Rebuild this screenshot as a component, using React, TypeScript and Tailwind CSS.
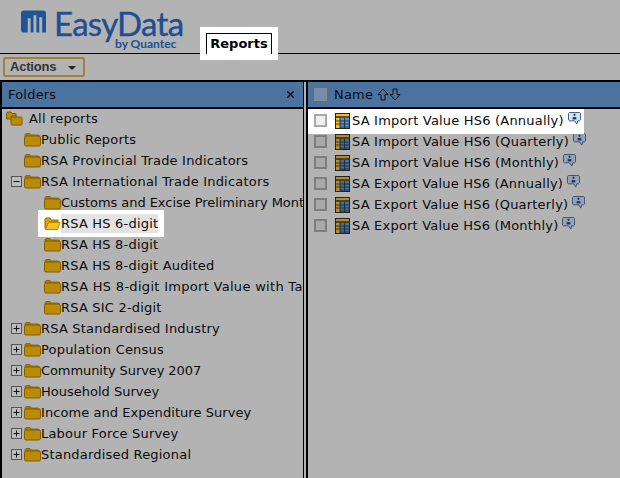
import React from 'react';
import { X } from 'lucide-react';

const folders = [
  { name: 'All reports', level: 0, icon: 'stack' },
  { name: 'Public Reports', level: 1 },
  { name: 'RSA Provincial Trade Indicators', level: 1 },
  { name: 'RSA International Trade Indicators', level: 1, toggle: 'minus' },
  { name: 'Customs and Excise Preliminary Mont', level: 2, track: 'tracking-[-0.05px]' },
  { name: 'RSA HS 6-digit', level: 2, active: true },
  { name: 'RSA HS 8-digit', level: 2 },
  { name: 'RSA HS 8-digit Audited', level: 2 },
  { name: 'RSA HS 8-digit Import Value with Ta', level: 2, track: 'tracking-[0.3px]' },
  { name: 'RSA SIC 2-digit', level: 2 },
  { name: 'RSA Standardised Industry', level: 1, toggle: 'plus' },
  { name: 'Population Census', level: 1, toggle: 'plus' },
  { name: 'Community Survey 2007', level: 1, toggle: 'plus', track: 'tracking-[-0.08px]' },
  { name: 'Household Survey', level: 1, toggle: 'plus', track: 'tracking-[0px]' },
  { name: 'Income and Expenditure Survey', level: 1, toggle: 'plus', track: 'tracking-[0.06px]' },
  { name: 'Labour Force Survey', level: 1, toggle: 'plus' },
  { name: 'Standardised Regional', level: 1, toggle: 'plus' },
];

const reports = [
  'SA Import Value HS6 (Annually)',
  'SA Import Value HS6 (Quarterly)',
  'SA Import Value HS6 (Monthly)',
  'SA Export Value HS6 (Annually)',
  'SA Export Value HS6 (Quarterly)',
  'SA Export Value HS6 (Monthly)',
];

const Logo = () => (
  <svg width="25" height="24" viewBox="0 0 26 24" className="shrink-0">
    <path d="M3 0H23A3 3 0 0 1 26 3V23H22V7H19V23H16V5H13V23H10V8H7V23H3A3 3 0 0 1 0 20V3A3 3 0 0 1 3 0Z" fill="#1f5597" />
  </svg>
);

const Folder = ({ open }: { open?: boolean }) => (
  <svg width="17" height="15" viewBox="0 0 17 15" className="shrink-0">
    {open ? (
      <>
        <path d="M1 3.5V12.5L3 13L5 6H14V4H7L6 2H2Z" fill="#d9a400" stroke="#8f6b00" />
        <path d="M4.5 6.5H16L13.5 13.5H1.5Z" fill="#fcc21c" stroke="#b58900" />
      </>
    ) : (
      <>
        <path d="M1 4V2.5L2 1.5H6L7 3H14.5L15.5 4V5H1Z" fill="#a67c00" stroke="#7f5f00" strokeWidth="0.8" />
        <rect x="0.5" y="4" width="16" height="10" rx="1.5" fill="#bb8b05" stroke="#7f5f00" />
      </>
    )}
  </svg>
);

const FolderStack = () => (
  <svg width="17" height="15" viewBox="0 0 17 15" className="shrink-0">
    <path d="M0.5 2.5L1.5 1H5L6 2.5H10V8H0.5Z" fill="#bb8b05" stroke="#7f5f00" />
    <rect x="5" y="6" width="11" height="8" rx="1" fill="#bb8b05" stroke="#7f5f00" />
    <path d="M5 6L6 4.5H10L11 6Z" fill="#a67c00" stroke="#7f5f00" strokeWidth="0.6" />
  </svg>
);

const Toggle = ({ kind }: { kind: string }) => (
  <svg width="11" height="11" viewBox="0 0 11 11" className="shrink-0">
    <rect x="0.5" y="0.5" width="10" height="10" fill="#bdbdbd" stroke="#555" />
    <path d="M2.5 5.5H8.5" stroke="#111" />
    {kind === 'plus' && <path d="M5.5 2.5V8.5" stroke="#111" />}
  </svg>
);

const TableIcon = ({ dim }: { dim?: boolean }) => (
  <svg width="15" height="16" viewBox="0 0 15 16" className="shrink-0">
    <rect x="0.5" y="0.5" width="14" height="15" fill={dim ? '#b98a2a' : '#f9b92f'} stroke="#222" />
    <path d="M1 4H14" stroke="#222" strokeWidth="1.4" />
    <rect x="5" y="5" width="9" height="10" fill={dim ? '#3f6f9f' : '#4d97dc'} />
    <path d="M5 4.5V15.5M9.5 5V15M5 8H14M5 11H14M1 8H5M1 11H5M5 14H14" stroke="#222" strokeWidth="0.8" />
  </svg>
);

const Comment = ({ dim }: { dim?: boolean }) => (
  <svg width="13" height="13" viewBox="0 0 14 14" className="shrink-0">
    <path d="M1.5 0.5H12.5L13.5 1.5V8.5L12.5 9.5H10.5L9.5 13L7 9.5H1.5L0.5 8.5V1.5Z" fill={dim ? '#97a3b3' : '#d3e1f2'} stroke="#2f4c7a" />
    <circle cx="7" cy="3" r="1.2" fill="#1c3560" />
    <path d="M5 8V5.5H9V8Z" fill="#1c3560" />
  </svg>
);

const ArrowUp = () => (
  <svg width="12" height="13" viewBox="0 0 12 13">
    <path d="M6 1L11 6.5H8V12H4V6.5H1Z" fill="none" stroke="#111" />
  </svg>
);

const ArrowDown = () => (
  <svg width="12" height="13" viewBox="0 0 12 13">
    <path d="M6 12L11 6.5H8V1H4V6.5H1Z" fill="none" stroke="#111" />
  </svg>
);

const Check = ({ header, lit }: { header?: boolean; lit?: boolean }) => (
  <div
    className={`w-[13px] h-[13px] shrink-0 border-2 ${
      header
        ? 'border-[#8a8a8a] bg-[#6f8fb1]'
        : lit
          ? 'border-[#a8a8a8] bg-[#efefef]'
          : 'border-[#7e7e7e] bg-[#a9a9a9]'
    }`}
  />
);

export default function App() {
  return (
    <div
      className="w-[620px] h-[478px] overflow-hidden bg-[#b3b3b3] text-[#0c0c0c] text-[13px] tracking-[0.2px] flex flex-col"
      style={{ fontFamily: '"DejaVu Sans", Verdana, sans-serif' }}
    >
      {/* Top bar */}
      <div className="h-[54px] flex border-b border-black shrink-0">
        <div className="w-[200px] flex items-start pl-[21px] pt-[10px] gap-[8px]">
          <Logo />
          <div className="flex flex-col items-end -mt-[1px]">
            <span className="text-[33px] leading-[28px] text-[#1d4f92] tracking-[-0.7px] [-webkit-text-stroke:0.4px_#1d4f92]" style={{ fontFamily: 'Lato, sans-serif' }}>
              EasyData
            </span>
            <span className="text-[12px] leading-[13px] font-bold text-[#1d4f92] mr-[7px] tracking-normal" style={{ fontFamily: 'Lato, sans-serif' }}>
              by Quantec
            </span>
          </div>
        </div>
        <div className="relative mt-[27px] w-[78px] h-[33px] bg-white flex justify-center z-10">
          <div className="mt-[6px] w-[66px] h-[21px] border border-b-0 border-black text-center font-bold leading-[19px] text-black tracking-normal">
            Reports
          </div>
        </div>
      </div>

      {/* Toolbar */}
      <div className="h-[26px] shrink-0 pl-[3px] pt-[3px]">
        <div
          className="w-[82px] h-[20px] border-2 border-[#a5803d] rounded-[2px] flex items-center justify-between pl-[5px] pr-[7px] font-bold text-[#333] text-[13px] tracking-[-0.2px]"
          style={{ fontFamily: '"Liberation Sans", Arial, sans-serif' }}
        >
          <span>Actions</span>
          <span className="w-0 h-0 border-x-[4px] border-x-transparent border-t-[4px] border-t-[#222] mt-[2px]" />
        </div>
      </div>

      {/* Panels */}
      <div className="flex-1 flex min-h-0 border-t-2 border-black">
        <div className="w-[304px] shrink-0 flex flex-col border-l-2 border-r border-black overflow-hidden">
          <div className="h-[27px] shrink-0 bg-[#4a749f] border-b-2 border-black flex items-center justify-between pl-[6px] pr-[7px]">
            <span>Folders</span>
            <X size={11} strokeWidth={3} color="#111" />
          </div>
          <div className="-mt-[1px]">
            {folders.map((f) => (
              <div key={f.name} className="h-[21px] flex items-center whitespace-nowrap">
                {f.level === 0 && (
                  <div className="flex items-center gap-[6px] pl-[4px]">
                    <FolderStack />
                    <span>{f.name}</span>
                  </div>
                )}
                {f.level === 1 && (
                  <div className="flex items-center">
                    <div className="w-[22px] pl-[9px]">{f.toggle && <Toggle kind={f.toggle} />}</div>
                    <Folder />
                    <span className={f.track}>{f.name}</span>
                  </div>
                )}
                {f.level === 2 && (
                  <div
                    className={`ml-[36px] flex items-center ${f.active ? 'bg-white h-[27px] pl-[6px] pr-[6px] relative z-10' : 'pl-[6px]'}`}
                  >
                    <Folder open={f.active} />
                    <span className={`${f.active ? 'bg-[#e3e3e3]' : ''} ${f.track ?? ''}`}>{f.name}</span>
                  </div>
                )}
              </div>
            ))}
          </div>
        </div>
        <div className="w-[2px] shrink-0" />
        <div className="flex-1 flex flex-col border-l-2 border-black min-w-0">
          <div className="h-[27px] shrink-0 bg-[#4a749f] border-b-2 border-black flex items-center pl-[6px]">
            <Check header />
            <span className="ml-[7px]">Name</span>
            <span className="ml-[4px] flex">
              <ArrowUp />
              <ArrowDown />
            </span>
          </div>
          <div className="pt-[1px]">
            {reports.map((r, i) => (
              <div
                key={r}
                className={`flex items-center whitespace-nowrap pl-[6px] ${i === 0 ? 'relative z-10 bg-white h-[25px] w-[276px] -mt-[1px] -mb-[3px] pt-[1px] pb-[3px]' : 'h-[21px]'}`}
              >
                <Check lit={i === 0} />
                <span className="ml-[8px]"><TableIcon dim={i !== 0} /></span>
                <span className="ml-[2px]">{r}</span>
                <span className="ml-[4px] -mt-[5px]"><Comment dim={i !== 0} /></span>
              </div>
            ))}
          </div>
        </div>
      </div>
    </div>
  );
}
